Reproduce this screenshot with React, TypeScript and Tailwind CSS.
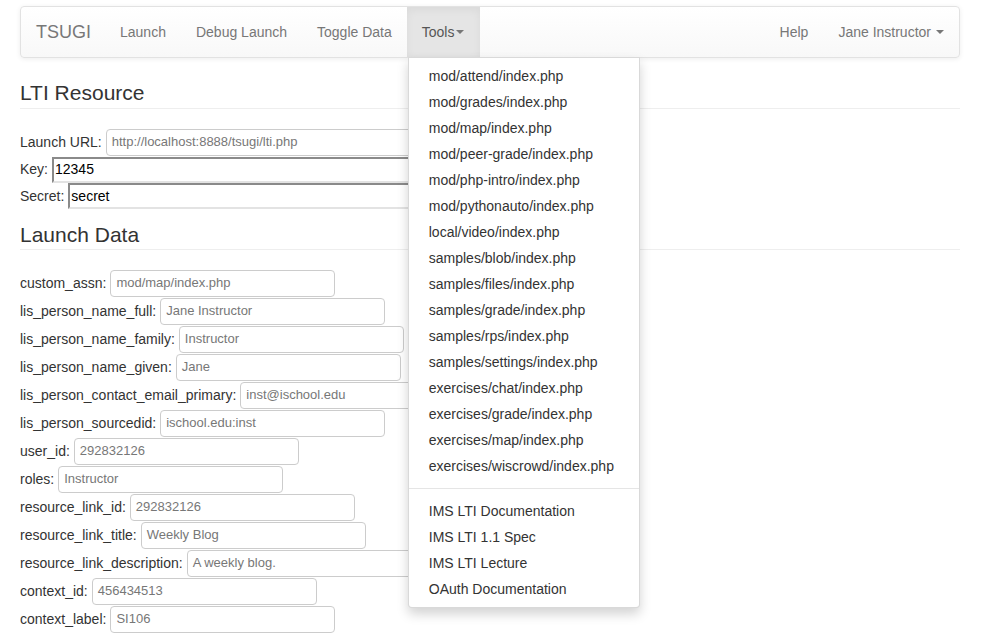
import React from "react";

const fields: [string, string][] = [
  ["custom_assn", "mod/map/index.php"],
  ["lis_person_name_full", "Jane Instructor"],
  ["lis_person_name_family", "Instructor"],
  ["lis_person_name_given", "Jane"],
  ["lis_person_contact_email_primary", "inst@ischool.edu"],
  ["lis_person_sourcedid", "ischool.edu:inst"],
  ["user_id", "292832126"],
  ["roles", "Instructor"],
  ["resource_link_id", "292832126"],
  ["resource_link_title", "Weekly Blog"],
  ["resource_link_description", "A weekly blog."],
  ["context_id", "456434513"],
  ["context_label", "SI106"],
];

const tools = [
  "mod/attend/index.php",
  "mod/grades/index.php",
  "mod/map/index.php",
  "mod/peer-grade/index.php",
  "mod/php-intro/index.php",
  "mod/pythonauto/index.php",
  "local/video/index.php",
  "samples/blob/index.php",
  "samples/files/index.php",
  "samples/grade/index.php",
  "samples/rps/index.php",
  "samples/settings/index.php",
  "exercises/chat/index.php",
  "exercises/grade/index.php",
  "exercises/map/index.php",
  "exercises/wiscrowd/index.php",
];

const docs = ["IMS LTI Documentation", "IMS LTI 1.1 Spec", "IMS LTI Lecture", "OAuth Documentation"];

function Caret() {
  return (
    <span className="ml-[2px] inline-block h-0 w-0 border-x-[4px] border-t-[4px] border-x-transparent border-t-[#777] align-middle" />
  );
}

function BsInput({ value }: { value: string }) {
  return (
    <div className="ml-[4px] flex h-[27px] w-[225px] shrink-0 items-center rounded-[4px] border border-[#ccc] bg-white pl-[5px] text-[13px] text-[#777]">
      {value}
    </div>
  );
}

function PlainInput({ value }: { value: string }) {
  return (
    <div className="ml-[4px] flex h-[26px] w-[400px] shrink-0 items-center border-2 border-b-[#e3e3e3] border-l-[#8a8a8a] border-r-[#e3e3e3] border-t-[#8a8a8a] bg-white pl-[1px] text-[14px] text-black">
      {value}
    </div>
  );
}

export default function App() {
  return (
    <div
      className="relative min-h-[633px] w-[1000px] overflow-hidden bg-white text-[14px] text-[#333]"
      style={{ fontFamily: '"Liberation Sans", Arial, Helvetica, sans-serif' }}
    >
      <div className="mx-[20px] w-[940px] pt-[6px]">
        {/* navbar */}
        <div className="flex h-[52px] items-stretch rounded-[4px] border border-[#e2e2e2] bg-gradient-to-b from-white to-[#f8f8f8] shadow-[0_1px_5px_rgba(0,0,0,0.075)]">
          <div className="flex items-center pl-[15px] pr-[14px] text-[18px] text-[#777]">TSUGI</div>
          <div className="flex items-center px-[15px] text-[#777]">Launch</div>
          <div className="flex items-center px-[15px] text-[#777]">Debug Launch</div>
          <div className="flex items-center px-[15px] text-[#777]">Toggle Data</div>
          <div className="relative flex items-center bg-[#e5e5e5] pl-[15px] pr-[16px] text-[#555] shadow-[inset_0_3px_9px_rgba(0,0,0,0.05)]">
            <span>Tools</span>
            <Caret />
            <div className="absolute left-[1px] top-full z-10 w-[232px] rounded-b-[4px] border border-[rgba(0,0,0,0.15)] bg-white py-[5px] shadow-[0_6px_12px_rgba(0,0,0,0.175)]">
              {tools.map((t) => (
                <div key={t} className="px-[20px] py-[3px] leading-[20px] text-[#333]">
                  {t}
                </div>
              ))}
              <div className="my-[9px] h-px bg-[#e5e5e5]" />
              {docs.map((t) => (
                <div key={t} className="px-[20px] py-[3px] leading-[20px] text-[#333]">
                  {t}
                </div>
              ))}
            </div>
          </div>
          <div className="flex-1" />
          <div className="flex items-center px-[15px] text-[#777]">Help</div>
          <div className="flex items-center px-[15px] text-[#777]">
            <span>Jane Instructor</span>
            <span className="ml-[5px] inline-block h-0 w-0 border-x-[4px] border-t-[4px] border-x-transparent border-t-[#777]" />
          </div>
        </div>

        {/* LTI Resource */}
        <div className="mt-[22px] border-b border-[#eee] pb-[2px]">
          <h3 className="h-[26px] text-[21px] font-medium leading-[26px] text-[#333]">LTI Resource</h3>
        </div>

        <div className="mt-[19px]">
          <div className="flex h-[28px] items-center">
            <span>Launch URL:</span>
            <div className="ml-[4px] flex h-[27px] w-[500px] shrink-0 items-center rounded-[4px] border border-[#ccc] bg-white pl-[5px] text-[13px] text-[#777]">
              http://localhost:8888/tsugi/lti.php
            </div>
          </div>
          <div className="flex h-[27px] items-center">
            <span>Key:</span>
            <PlainInput value="12345" />
          </div>
          <div className="flex h-[26px] items-center">
            <span>Secret:</span>
            <PlainInput value="secret" />
          </div>
        </div>

        {/* Launch Data */}
        <div className="mt-[13px] border-b border-[#eee] pb-[1px]">
          <h3 className="h-[26px] text-[21px] font-medium leading-[26px] text-[#333]">Launch Data</h3>
        </div>

        <div className="mt-[19px]">
          {fields.map(([k, v]) => (
            <div key={k} className="flex h-[28px] items-center">
              <span>{k}:</span>
              <BsInput value={v} />
            </div>
          ))}
        </div>
      </div>
    </div>
  );
}
